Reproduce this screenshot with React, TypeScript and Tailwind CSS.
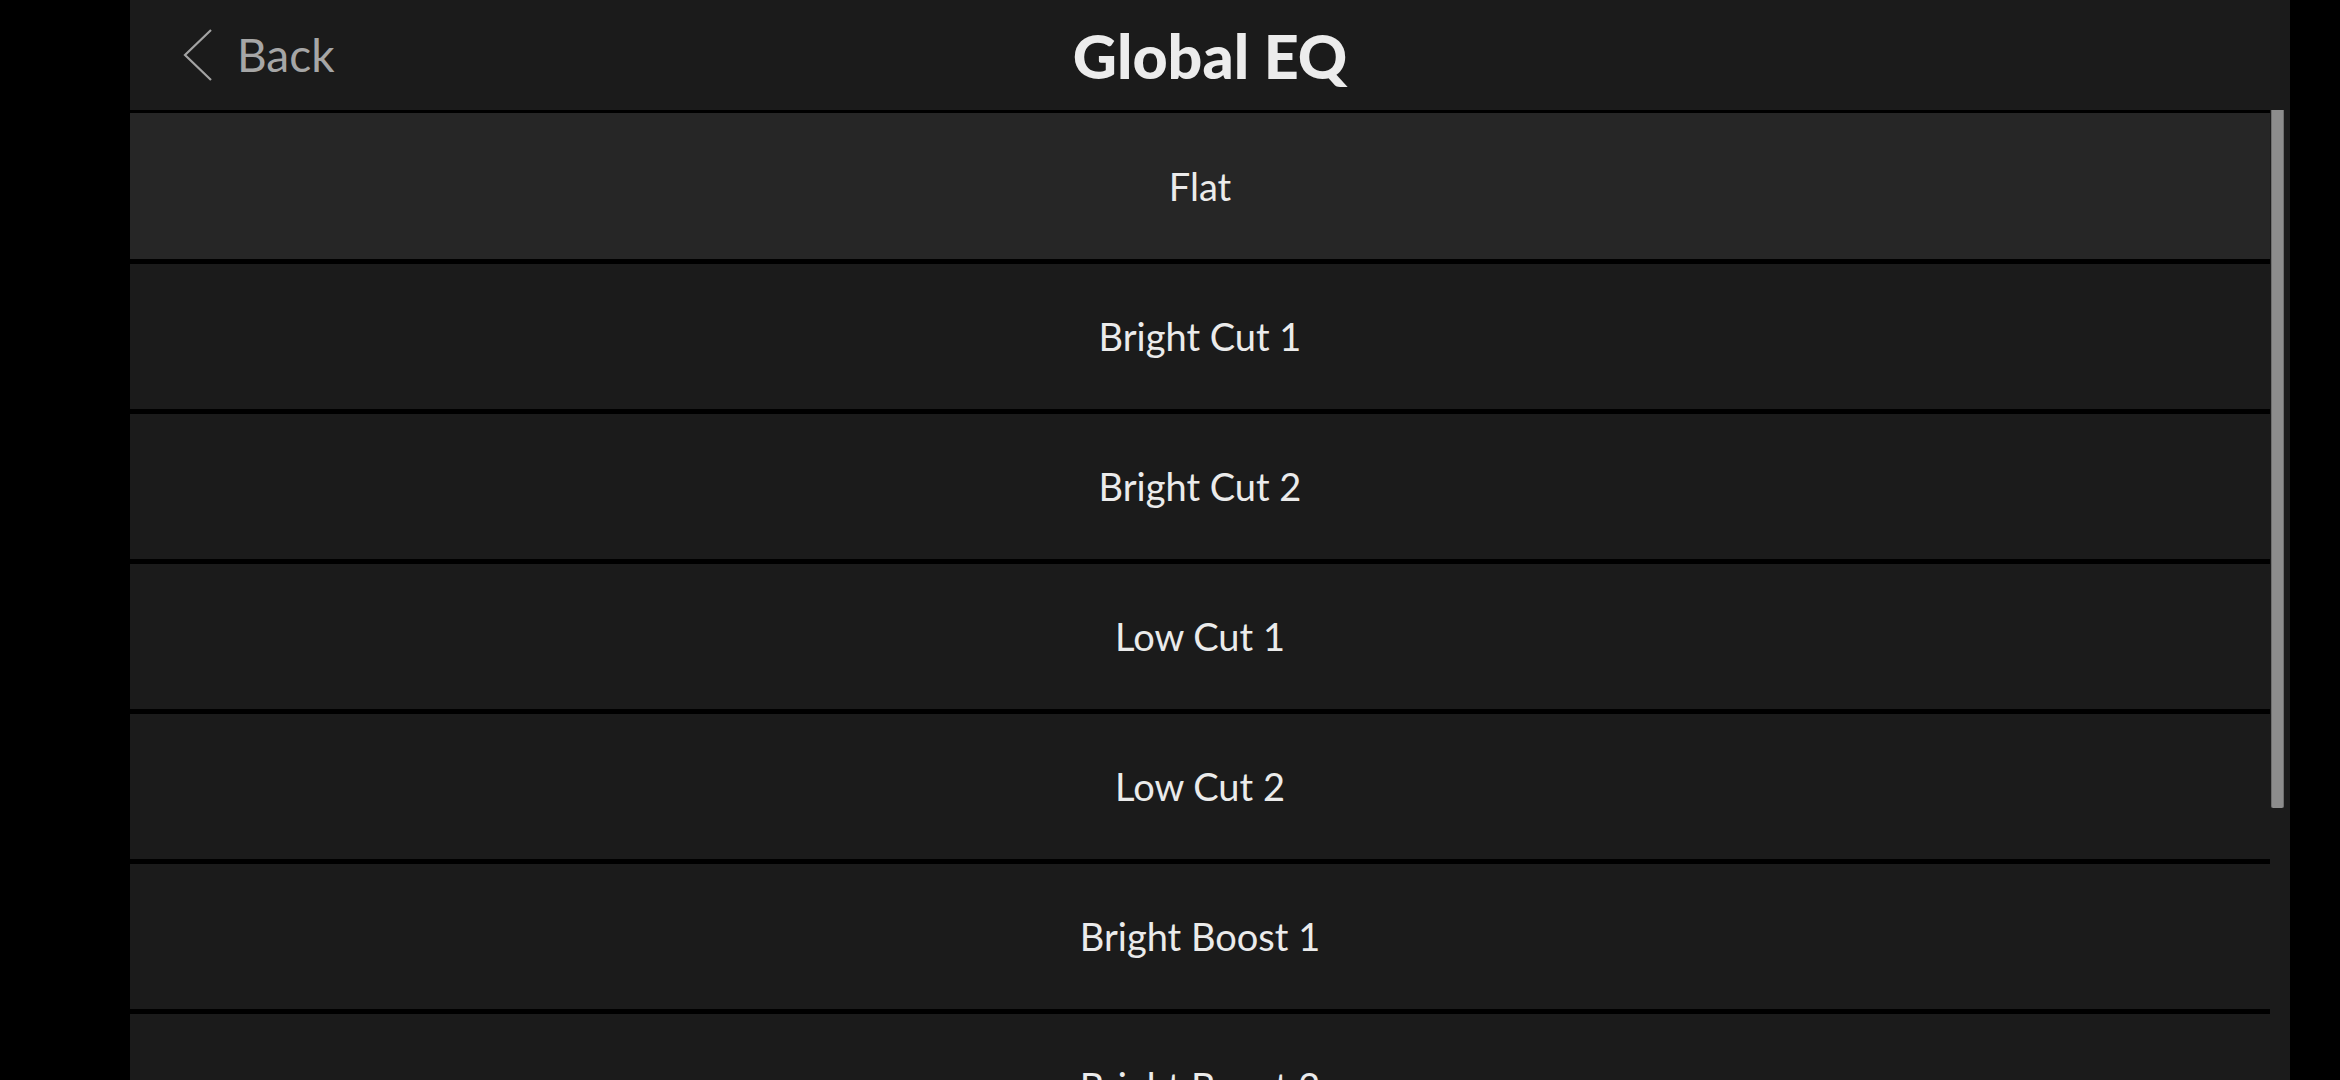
import React from "react";

const presets = [
  "Flat",
  "Bright Cut 1",
  "Bright Cut 2",
  "Low Cut 1",
  "Low Cut 2",
  "Bright Boost 1",
  "Bright Boost 2",
];

const ChevronLeft = () => (
  <svg width="30" height="52" viewBox="0 0 30 52" fill="none">
    <path d="M28 1 L2 26 L28 51" stroke="#a3a3a3" strokeWidth="2.2" />
  </svg>
);

const PresetRow = ({ name, active }: { name: string; active: boolean }) => (
  <div
    className={`flex items-center justify-center shrink-0 border-b-[5px] border-black ${
      active ? "h-[151px] bg-[#262626]" : "h-[150px] bg-[#1b1b1b]"
    }`}
  >
    <span className="text-[38px] text-[#ebebeb]">{name}</span>
  </div>
);

export default function App() {
  const selected = "Flat";

  return (
    <div
      className="h-screen w-full bg-black flex overflow-hidden"
      style={{ fontFamily: "Lato, 'Noto Sans', sans-serif" }}
    >
      <div className="ml-[130px] w-[2160px] h-full bg-[#1b1b1b] flex flex-col">
        {/* top bar */}
        <div className="relative h-[110px] shrink-0 flex items-center justify-center">
          <button className="absolute left-[53px] top-[29px] flex items-center gap-[24px]">
            <ChevronLeft />
            <span className="text-[46px] text-[#a6a6a6] leading-none">Back</span>
          </button>
          <h1 className="text-[61px] font-black text-[#ececec] leading-none">
            Global EQ
          </h1>
        </div>

        {/* preset list + scroll gutter */}
        <div className="flex flex-1 min-h-0">
          <div className="flex-1 flex flex-col border-t-[3px] border-black overflow-hidden">
            {presets.map((p) => (
              <PresetRow key={p} name={p} active={p === selected} />
            ))}
          </div>
          <div className="w-[20px] shrink-0">
            <div className="ml-px w-[13px] h-[698px] bg-[#8c8c8c] border-x border-[#6e6e6e] rounded-b-[2px]" />
          </div>
        </div>
      </div>
    </div>
  );
}
